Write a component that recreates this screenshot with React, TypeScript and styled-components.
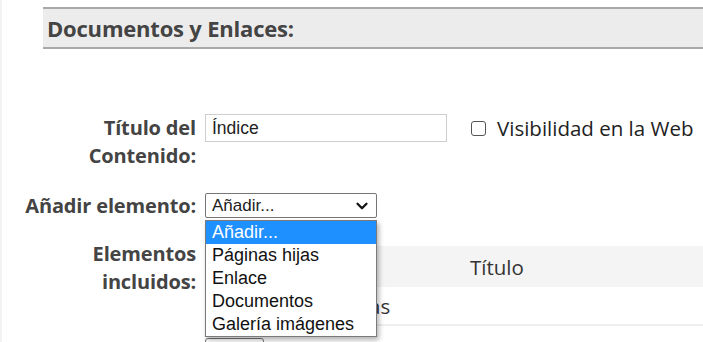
import styled, { createGlobalStyle } from "styled-components";
import { ChevronDown } from "lucide-react";

const GlobalStyle = createGlobalStyle`
  body {
    margin: 0;
    background: #ffffff;
    font-family: "Open Sans", "Noto Sans", sans-serif;
    color: #333333;
  }
`;

const options = ["Añadir...", "Páginas hijas", "Enlace", "Documentos", "Galería imágenes"];

const App = () => {
  return (
    <Page>
      <GlobalStyle />
      <SectionHeader>
        <h2>Documentos y Enlaces:</h2>
      </SectionHeader>
      <Form>
        <FieldRow>
          <Label>
            Título del
            <br />
            Contenido:
          </Label>
          <Fields>
            <TextInput defaultValue="Índice" />
            <CheckLabel>
              <CheckBox />
              Visibilidad en la Web
            </CheckLabel>
          </Fields>
        </FieldRow>
        <FieldRow $gap={22}>
          <Label>Añadir elemento:</Label>
          <SelectWrap>
            <SelectBox>
              <span>Añadir...</span>
              <ChevronDown size={18} strokeWidth={3} color="#111" />
            </SelectBox>
            <OptionList>
              {options.map((o, i) => (
                <OptionItem key={o} $active={i === 0}>
                  {o}
                </OptionItem>
              ))}
            </OptionList>
          </SelectWrap>
        </FieldRow>
        <FieldRow $gap={20}>
          <Label>
            Elementos
            <br />
            incluidos:
          </Label>
          <TableArea>
            <Table>
              <thead>
                <tr>
                  <HeadCell $width={265} />
                  <HeadCell>Título</HeadCell>
                </tr>
              </thead>
              <tbody>
                <tr>
                  <BodyCell $pad={62}>Páginas hijas</BodyCell>
                  <BodyCell />
                </tr>
              </tbody>
            </Table>
            <SmallButton />
          </TableArea>
        </FieldRow>
      </Form>
    </Page>
  );
};

export default App;

const Page = styled.div`
  width: 703px;
  height: 342px;
  overflow: hidden;
  border-left: 2px solid #f2f2f2;
  box-sizing: border-box;
`;

const SectionHeader = styled.div`
  margin: 7px 0 0 41px;
  height: 38px;
  background: #ececec;
  border-top: 2px solid #a9a9a9;
  border-bottom: 2px solid #a9a9a9;
  display: flex;
  align-items: center;
  padding-left: 4px;
  h2 {
    margin: 0;
    font-size: 22px;
    font-weight: 700;
    color: #444444;
    letter-spacing: -0.2px;
  }
`;

const Form = styled.div`
  margin-top: 65px;
`;

const FieldRow = styled.div<{ $gap?: number }>`
  display: grid;
  grid-template-columns: 194px 1fr;
  column-gap: 9px;
  align-items: start;
  margin-top: ${(p) => p.$gap ?? 0}px;
`;

const Label = styled.div`
  text-align: right;
  font-size: 20px;
  font-weight: 700;
  line-height: 28px;
  color: #444444;
  letter-spacing: -0.15px;
`;

const Fields = styled.div`
  display: flex;
  align-items: center;
`;

const TextInput = styled.input`
  width: 242px;
  height: 28px;
  box-sizing: border-box;
  border: 1px solid #cfcfcf;
  padding: 0 6px;
  font-family: "Liberation Sans", Arial, sans-serif;
  font-size: 17.5px;
  color: #222222;
  outline: none;
`;

const CheckLabel = styled.label`
  display: flex;
  align-items: center;
  margin-left: 24px;
  font-size: 20.5px;
  color: #222222;
`;

const CheckBox = styled.span`
  width: 13px;
  height: 13px;
  border: 1.5px solid #555555;
  border-radius: 3px;
  margin-right: 11px;
`;

const SelectWrap = styled.div`
  position: relative;
  width: 172px;
  padding-top: 1px;
`;

const SelectBox = styled.div`
  height: 25px;
  box-sizing: border-box;
  border: 1px solid #767676;
  border-radius: 2px;
  display: flex;
  align-items: center;
  justify-content: space-between;
  padding: 0 5px 0 6px;
  font-family: "Liberation Sans", Arial, sans-serif;
  font-size: 17px;
  color: #222222;
`;

const OptionList = styled.div`
  position: absolute;
  top: 28px;
  left: 0;
  width: 172px;
  box-sizing: border-box;
  background: #ffffff;
  border: 1px solid #7a7a7a;
  box-shadow: 2px 3px 5px rgba(0, 0, 0, 0.3);
  z-index: 5;
`;

const OptionItem = styled.div<{ $active?: boolean }>`
  height: 23px;
  line-height: 23px;
  padding-left: 6px;
  font-family: "Liberation Sans", Arial, sans-serif;
  font-size: 18px;
  color: ${(p) => (p.$active ? "#ffffff" : "#111111")};
  background: ${(p) => (p.$active ? "#1e90ff" : "transparent")};
`;

const TableArea = styled.div`
  padding-top: 6px;
`;

const Table = styled.table`
  width: 100%;
  border-collapse: collapse;
  font-size: 20.5px;
  color: #333333;
`;

const HeadCell = styled.th<{ $width?: number }>`
  background: #f4f4f4;
  height: 41px;
  padding: 0;
  text-align: left;
  font-weight: 400;
  width: ${(p) => (p.$width ? `${p.$width}px` : "auto")};
`;

const BodyCell = styled.td<{ $pad?: number }>`
  height: 37px;
  padding: 0 0 0 ${(p) => p.$pad ?? 0}px;
  border-bottom: 2px solid #eeeeee;
`;

const SmallButton = styled.div`
  margin-top: 12px;
  width: 57px;
  height: 28px;
  border: 1px solid #767676;
  border-radius: 3px;
`;
